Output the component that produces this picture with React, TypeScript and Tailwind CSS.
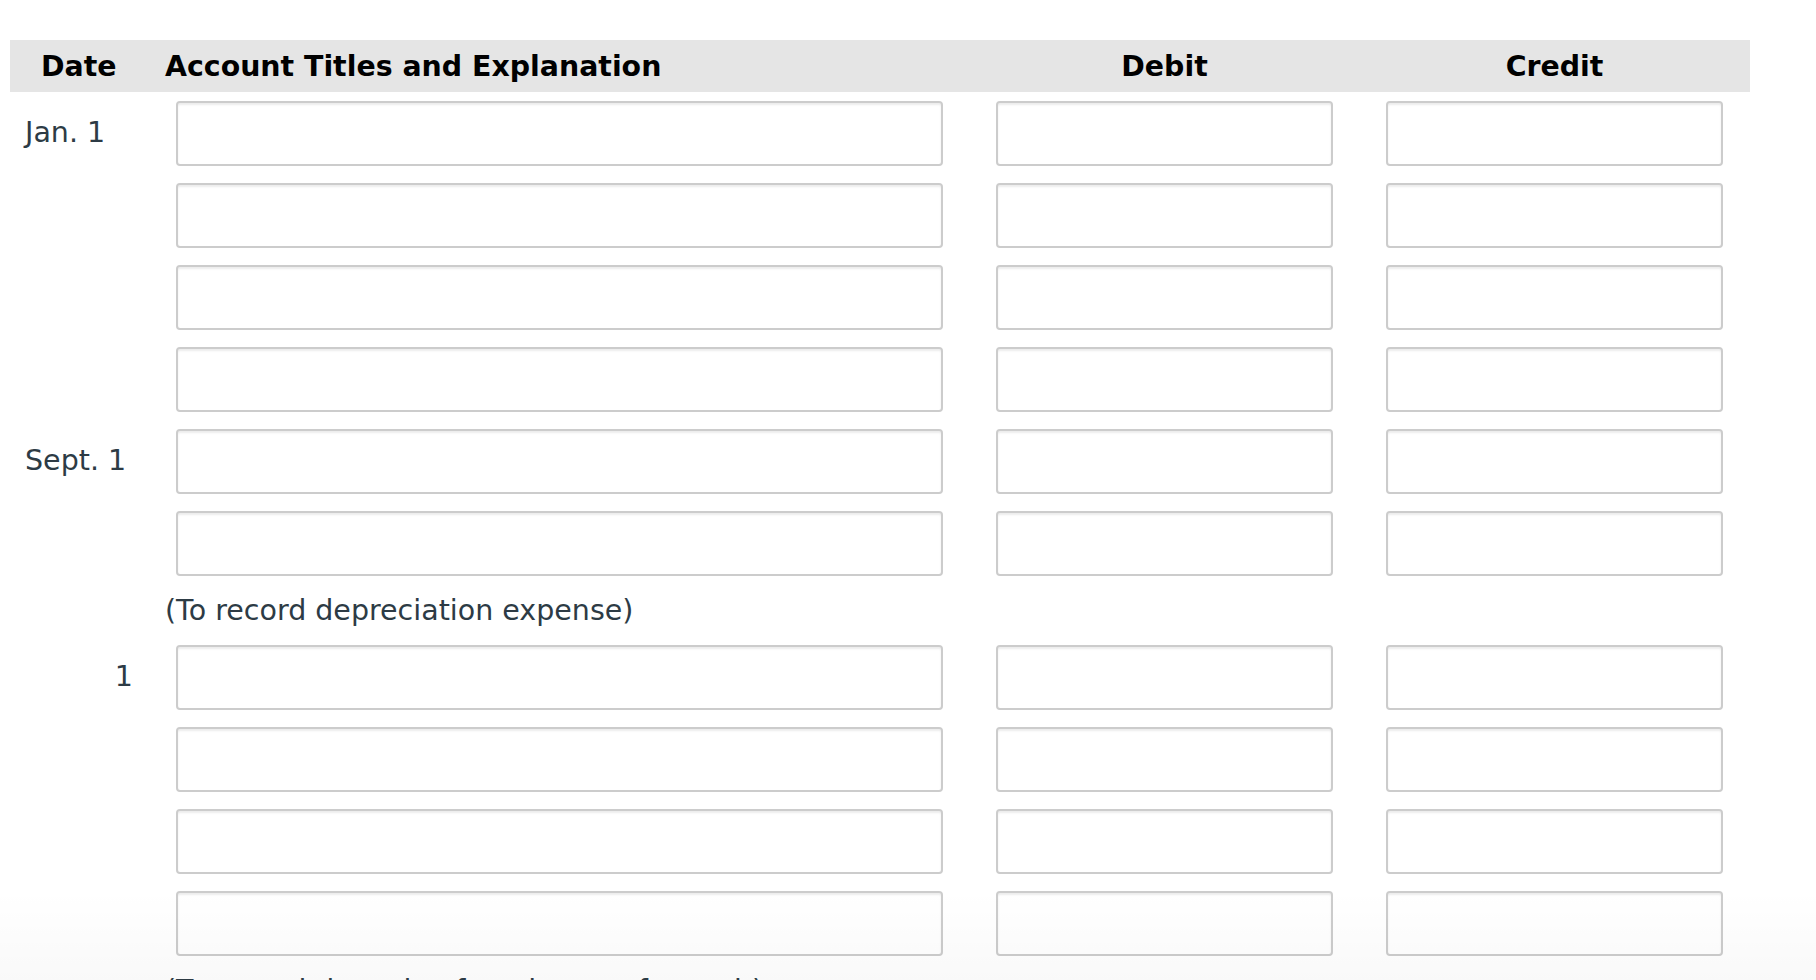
import React from "react";

const FONT = { fontFamily: '"DejaVu Sans", Verdana, sans-serif' };

function Box({ w }: { w: string }) {
  return (
    <div
      className={`${w} h-[65px] shrink-0 rounded-[4px] border-2 border-[#cccccc] bg-white shadow-[inset_0_2px_2px_rgba(0,0,0,0.075)]`}
    />
  );
}

function EntryRow({ date, right }: { date?: string; right?: boolean }) {
  return (
    <div className="flex items-center">
      <div
        className={`w-[155px] shrink-0 text-[28.5px] leading-none text-[#2d3b45] ${
          right ? "text-right pr-[32px]" : "pl-[15px]"
        }`}
      >
        {date ?? ""}
      </div>
      <div className="w-[805px] shrink-0 pl-[11px]">
        <Box w="w-[767px]" />
      </div>
      <div className="w-[390px] shrink-0 pl-[26px]">
        <Box w="w-[337px]" />
      </div>
      <div className="w-[390px] shrink-0 pl-[26px]">
        <Box w="w-[337px]" />
      </div>
    </div>
  );
}

function Explanation({ text }: { text: string }) {
  return (
    <div className="flex h-[35px] items-center">
      <div className="w-[155px] shrink-0" />
      <div className="text-[28.5px] leading-[35px] text-[#2d3b45] whitespace-nowrap">{text}</div>
    </div>
  );
}

export default function App() {
  return (
    <div className="relative h-[980px] w-[1816px] overflow-hidden bg-white" style={FONT}>
      <div className="pl-[10px] pt-[40px]">
        <div className="flex h-[52px] w-[1740px] items-center bg-[#e5e5e5] pt-[2px] text-[28.4px] font-bold text-black">
          <div className="w-[155px] shrink-0 pl-[31px]">Date</div>
          <div className="w-[805px] shrink-0">Account Titles and Explanation</div>
          <div className="w-[390px] shrink-0 pl-[26px]">
            <div className="w-[337px] text-center">Debit</div>
          </div>
          <div className="w-[390px] shrink-0 pl-[26px]">
            <div className="w-[337px] text-center">Credit</div>
          </div>
        </div>
        <div className="mt-[9px] flex flex-col gap-[17px]">
          <EntryRow date="Jan. 1" />
          <EntryRow />
          <EntryRow />
          <EntryRow />
          <EntryRow date="Sept. 1" />
          <EntryRow />
          <Explanation text="(To record depreciation expense)" />
          <EntryRow date="1" right />
          <EntryRow />
          <EntryRow />
          <EntryRow />
          <Explanation text="(To record the sale of equipment for cash)" />
        </div>
      </div>
      <div className="pointer-events-none absolute bottom-0 left-0 h-[90px] w-full bg-gradient-to-b from-transparent to-[rgba(0,0,0,0.025)]" />
    </div>
  );
}
